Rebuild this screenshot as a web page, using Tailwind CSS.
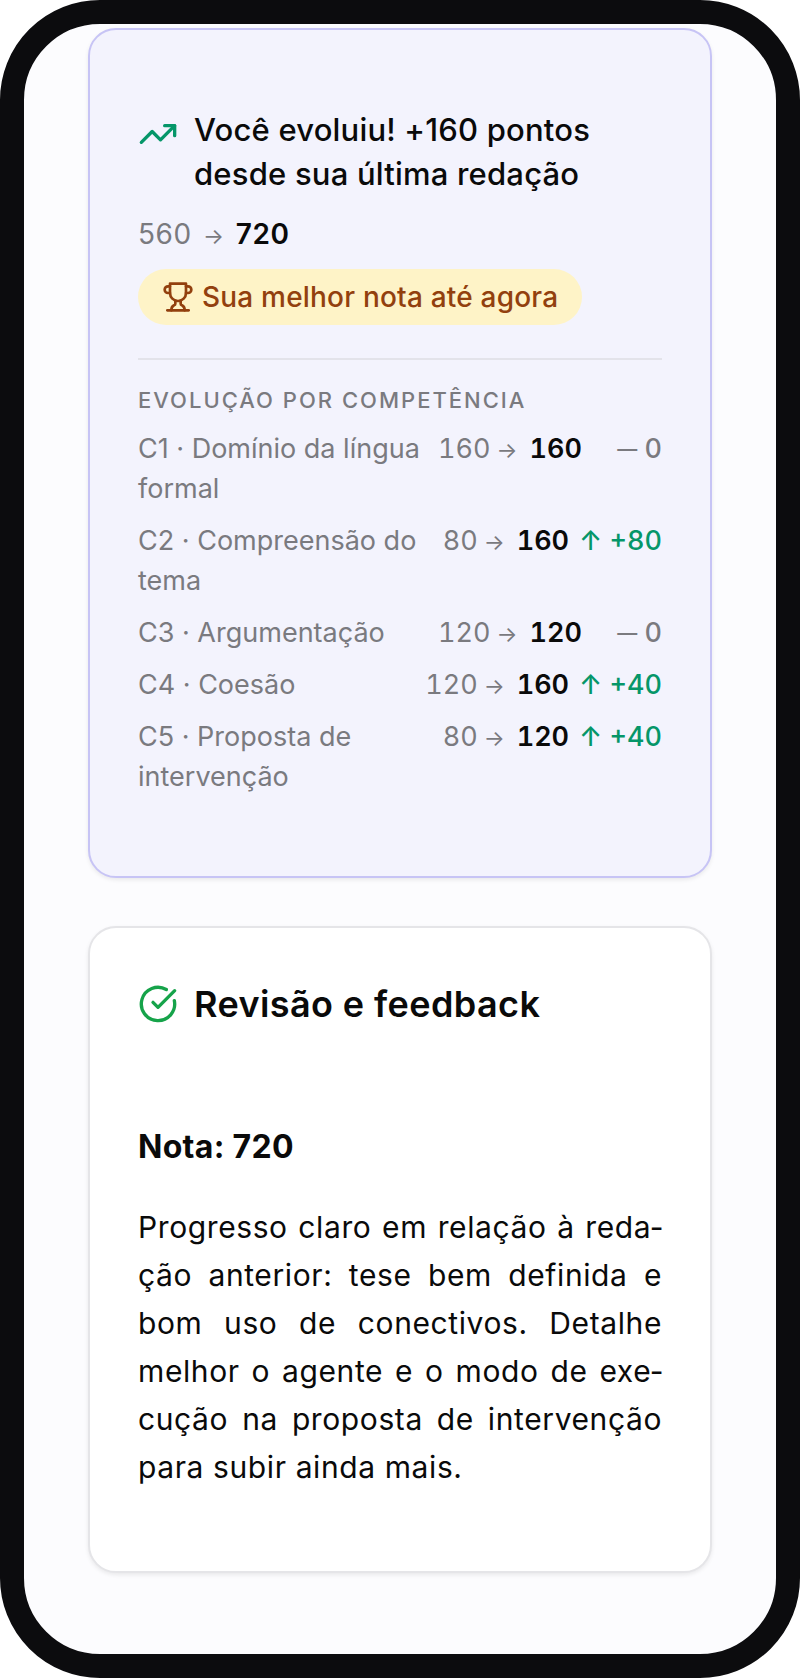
<!DOCTYPE html>
<html lang="pt-BR">
<head>
<meta charset="utf-8"/>
<title>Revisão e feedback</title>
<script src="https://cdn.jsdelivr.net/npm/@tailwindcss/browser@4"></script>
</head>
<body class="bg-white font-[Inter,sans-serif]">
<div class="w-[800px] h-[1678px] border-[24px] border-[#0c0c0e] rounded-[100px] bg-[#fcfcfe] overflow-hidden">
  <main class="px-[64px] pt-[4px] flex flex-col gap-[48px]">

    <!-- evolucao -->
    <section class="border-2 border-[#c7c4f5] bg-[#f3f3fd] rounded-[28px] shadow-[0_2px_4px_rgba(0,0,0,0.08)] px-[48px] pt-[78px] pb-[78px] h-[850px]">
      <div class="flex items-start gap-[16px]">
        <svg class="w-[40px] h-[40px] shrink-0 mt-[6px] text-[#059669]" viewBox="0 0 24 24" fill="none" stroke="currentColor" stroke-width="2" stroke-linecap="round" stroke-linejoin="round"><polyline points="22 7 13.5 15.5 8.5 10.5 2 17"/><polyline points="16 7 22 7 22 13"/></svg>
        <h2 class="text-[31px] leading-[44px] font-medium text-[#0a0a0a] tracking-[0.2px]">Você evoluiu! +160 pontos desde sua última redação</h2>
      </div>
      <p class="mt-[18px] text-[28px] leading-[40px] tracking-[0.5px] text-[#7a7a7f]">560 <span class="text-[22px] mx-[3px] leading-none">→</span> <span class="font-semibold text-[#0a0a0a]">720</span></p>
      <div class="mt-[15px] inline-flex items-center gap-[8px] h-[56px] px-[24px] rounded-full bg-[#fef3c7] text-[#92400e]">
        <svg class="w-[32px] h-[32px] shrink-0" viewBox="0 0 24 24" fill="none" stroke="currentColor" stroke-width="2" stroke-linecap="round" stroke-linejoin="round"><path d="M6 9H4.5a2.5 2.5 0 0 1 0-5H6"/><path d="M18 9h1.5a2.5 2.5 0 0 0 0-5H18"/><path d="M4 22h16"/><path d="M10 14.66V17c0 .55-.47.98-.97 1.21C7.85 18.75 7 20.24 7 22"/><path d="M14 14.66V17c0 .55.47.98.97 1.21C16.15 18.75 17 20.24 17 22"/><path d="M18 2H6v7a6 6 0 0 0 12 0V2Z"/></svg>
        <span class="text-[28px] tracking-[0.2px] font-medium">Sua melhor nota até agora</span>
      </div>
      <div class="mt-[33px] border-t-2 border-[#e3e3ea] pt-[24px]">
        <h3 class="text-[22px] leading-[32px] font-medium tracking-[2px] text-[#7a7a7f]">EVOLUÇÃO POR COMPETÊNCIA</h3>
        <ul class="mt-[13px] flex flex-col gap-[12px] text-[27px] leading-[40px]">
          <li class="flex items-start gap-[14px]">
            <span class="flex-1 text-[#7a7a7f]">C1 · Domínio da língua formal</span>
            <span class="flex items-center gap-[10px] shrink-0 tabular-nums h-[40px]">
              <span class="text-[#7a7a7f] mr-[2px]">160<span class="text-[22px] ml-[6px] leading-none">→</span></span>
              <b class="font-semibold text-[#0a0a0a]">160</b>
              <span class="min-w-[70px] text-right text-[#7a7a7f] font-medium"><span class="text-[20px] leading-none align-[2px]">—</span> 0</span>
            </span>
          </li>
          <li class="flex items-start gap-[14px]">
            <span class="flex-1 text-[#7a7a7f]">C2 · Compreensão do tema</span>
            <span class="flex items-center gap-[10px] shrink-0 tabular-nums h-[40px]">
              <span class="text-[#7a7a7f] mr-[2px]">80<span class="text-[22px] ml-[6px] leading-none">→</span></span>
              <b class="font-semibold text-[#0a0a0a]">160</b>
              <span class="min-w-[70px] text-right text-[#059669] font-medium"><span class="leading-none">↑</span> +80</span>
            </span>
          </li>
          <li class="flex items-start gap-[14px]">
            <span class="flex-1 text-[#7a7a7f]">C3 · Argumentação</span>
            <span class="flex items-center gap-[10px] shrink-0 tabular-nums h-[40px]">
              <span class="text-[#7a7a7f] mr-[2px]">120<span class="text-[22px] ml-[6px] leading-none">→</span></span>
              <b class="font-semibold text-[#0a0a0a]">120</b>
              <span class="min-w-[70px] text-right text-[#7a7a7f] font-medium"><span class="text-[20px] leading-none align-[2px]">—</span> 0</span>
            </span>
          </li>
          <li class="flex items-start gap-[14px]">
            <span class="flex-1 text-[#7a7a7f]">C4 · Coesão</span>
            <span class="flex items-center gap-[10px] shrink-0 tabular-nums h-[40px]">
              <span class="text-[#7a7a7f] mr-[2px]">120<span class="text-[22px] ml-[6px] leading-none">→</span></span>
              <b class="font-semibold text-[#0a0a0a]">160</b>
              <span class="min-w-[70px] text-right text-[#059669] font-medium"><span class="leading-none">↑</span> +40</span>
            </span>
          </li>
          <li class="flex items-start gap-[14px]">
            <span class="flex-1 text-[#7a7a7f]">C5 · Proposta de intervenção</span>
            <span class="flex items-center gap-[10px] shrink-0 tabular-nums h-[40px]">
              <span class="text-[#7a7a7f] mr-[2px]">80<span class="text-[22px] ml-[6px] leading-none">→</span></span>
              <b class="font-semibold text-[#0a0a0a]">120</b>
              <span class="min-w-[70px] text-right text-[#059669] font-medium"><span class="leading-none">↑</span> +40</span>
            </span>
          </li>
        </ul>
      </div>
    </section>

    <!-- feedback -->
    <section class="border-2 border-[#e5e5e8] bg-white rounded-[28px] shadow-[0_2px_4px_rgba(0,0,0,0.08)] px-[48px] h-[647px]">
      <div class="flex items-center gap-[16px] mt-[54px]">
        <svg class="w-[40px] h-[40px] shrink-0 text-[#16a34a]" viewBox="0 0 24 24" fill="none" stroke="currentColor" stroke-width="2" stroke-linecap="round" stroke-linejoin="round"><path d="M21.801 10A10 10 0 1 1 17 3.335"/><path d="m9 11 3 3L22 4"/></svg>
        <h2 class="text-[36px] leading-[44px] font-semibold tracking-[0.4px] text-[#0a0a0a]">Revisão e feedback</h2>
      </div>
      <p class="mt-[99px] text-[32px] leading-[44px] tracking-[0.3px] font-bold text-[#0a0a0a]">Nota: 720</p>
      <p class="mt-[34px] text-[30px] leading-[48px] tracking-[0.6px] text-[#0a0a0a] text-justify">Progresso claro em relação à reda&shy;ção anterior: tese bem definida e bom uso de conectivos. Detalhe melhor o agente e o modo de exe&shy;cução na proposta de intervenção para subir ainda mais.</p>
    </section>
  </main>
</div>
</body>
</html>
